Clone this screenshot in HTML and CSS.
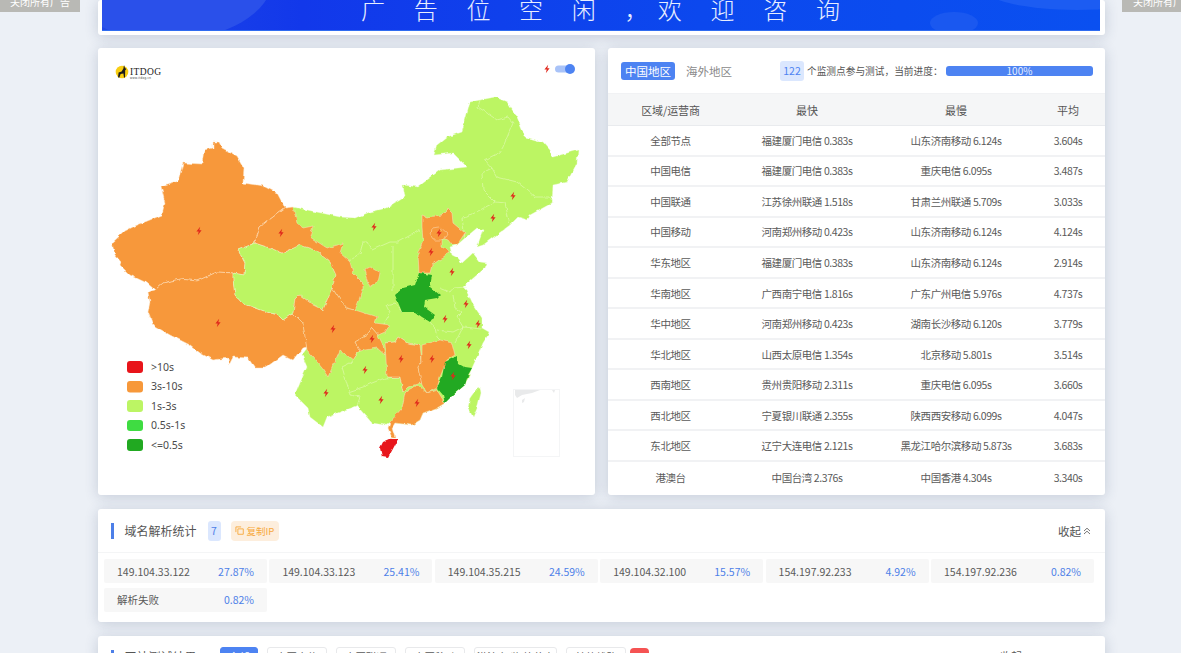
FILE: index.html
```html
<!DOCTYPE html>
<html lang="zh-CN">
<head>
<meta charset="utf-8">
<title>ITDOG 网站测速</title>
<link rel="stylesheet" href="styles.css">
</head>
<body>
<button class="close-ad close-left">关闭所有广告</button>
<button class="close-ad close-right">关闭所有广告</button>
<main class="main">
  <section class="card banner">
    <div class="banner-blue">
      <span class="bubble bubble-left"></span>
      <span class="bubble bubble-right"></span>
      <span class="bubble bubble-small"></span>
      <span class="banner-text">广告位空闲<span class="comma">，</span>欢迎咨询</span>
    </div>
  </section>

  <div class="two-col">
    <section class="card map-card">
      <svg class="map" viewBox="98 48 497 447" width="497" height="447" xmlns="http://www.w3.org/2000/svg">
        <defs>
          <path id="bolt" d="M1.200-4.200-2.600.6H-.3L-1.200 4.200 2.600-.8H.3Z"/>
          <filter id="rough" x="98" y="48" width="497" height="447" filterUnits="userSpaceOnUse" primitiveUnits="userSpaceOnUse">
            <feTurbulence type="fractalNoise" baseFrequency=".16" numOctaves="2" seed="4" result="n"/>
            <feDisplacementMap in="SourceGraphic" in2="n" scale="3.500" xChannelSelector="R" yChannelSelector="G"/>
          </filter>
        </defs>
        <circle class="logo-sun" cx="122" cy="72" r="6.300"/>
        <path class="logo-dog" d="M118 77.500l.6-5 3-1 1.800-3 .6-3.500 1 3 1.400 1-1.200 1.200-.2 7.300h-1l-.6-4-2.800.4-1.200 3.600z"/>
        <text class="logo-text" x="130" y="75">ITDOG</text>
        <text class="logo-sub" x="130" y="79">www.itdog.cn</text>

        <use href="#bolt" class="bolt" x="547" y="69"/>
        <rect class="switch-track" x="555" y="65.500" width="18" height="7" rx="3.500"/>
        <circle class="switch-knob" cx="570" cy="69" r="5"/>

        <g class="rough">
        <polygon class="p-green" points="293,207 340,217 355,218 370,212 387,208 405,197 403,185 418,187 440,170 467,167 453,153 434,155 437,145 447,137 462,132 468,110 470,102 495,97 507,102 517,117 525,137 543,142 550,150 553,157 578,150 577,163 567,182 553,185 552,203 530,215 528,220 518,217 510,225 483,245 477,247 483,230 477,228 465,238 457,245 450,247 452,255 458,258 462,263 473,253 480,262 487,263 485,268 463,287 466,290 472,303 482,318 482,328 489,332 488,335 483,343 478,355 472,368 465,385 453,395 445,403 437,408 423,413 420,420 412,425 395,423 390,422 385,425 372,423 365,415 357,406 340,412 327,417 323,427 310,417 308,408 295,395 300,383 307,367 302,355 307,348 293,313"/>
        <polyline class="line" points="480,100 478,107 487,113 497,120 508,117 513,123 503,147 500,152 485,160 492,168 497,177 517,182 527,190 535,197 550,197 553,203"/>
        <polyline class="line" points="492,168 482,173 483,190 495,202 505,203 510,225"/>
        <polyline class="line" points="495,202 467,217 462,218 465,238"/>
        <polyline class="line" points="398,242 420,230"/>
        <polyline class="line" points="393,245 393,290"/>
        <polyline class="line" points="348,262 360,253 363,242 367,242 372,250 390,242 398,242"/>
        <polyline class="line" points="386,305 395,303 402,312"/>
        <polyline class="line" points="386,305 390,313 378,335"/>
        <polyline class="line" points="430,322 435,328 437,337 440,340"/>
        <polyline class="line" points="385,343 395,342 398,337 407,343 420,345"/>
        <polyline class="line" points="437,330 453,332 463,327 455,343"/>
        <polyline class="line" points="440,288 450,292 453,288 467,287"/>
        <polyline class="line" points="453,295 455,308 462,312 457,317 463,327 482,329"/>
        <polyline class="line" points="342,367 350,363 360,351"/>
        <polyline class="line" points="342,367 348,387 350,395 360,397 357,406"/>
        <polyline class="line" points="348,392 363,387 372,383 385,378"/>
        <polyline class="line" points="385,378 400,377 403,392"/>

        <polygon class="p-orange" points="112,243 125,231 135,226 145,222 162,215 165,203 161,186 178,181 183,163 202,164 204,150 213,148 213,142 219,142 222,148 237,156 244,168 243,183 263,186 277,193 285,208 273,217 260,227 255,243 238,250 245,263 244,275 233,273 217,272 197,281 180,279 163,283 155,290 147,283 130,275 120,265 121,262 115,255"/>
        <polygon class="p-orange" points="155,290 163,283 180,279 197,281 217,272 233,273 233,280 235,295 242,303 267,312 278,315 283,320 293,313 303,323 307,347 302,348 293,360 283,355 265,368 255,368 248,358 233,357 229,365 228,358 213,360 200,353 190,345 170,335 153,325 148,312 150,302 148,292"/>
        <polygon class="p-green" points="238,250 255,243 270,248 283,253 300,245 315,250 330,262 336,275 332,288 323,310 313,305 300,295 295,300 293,313 283,320 278,315 267,312 242,303 235,295 233,280 233,273 244,275 245,263"/>
        <polygon class="p-orange" points="285,208 293,207 297,223 303,228 313,226 310,237 327,248 330,247 343,243 340,253 350,262 353,273 363,283 363,290 358,303 355,310 347,308 340,300 332,288 336,275 330,262 315,250 300,245 283,253 270,248 255,243 260,227 273,217"/>
        <polygon class="p-orange" points="293,313 295,300 300,295 313,305 323,310 332,288 340,300 347,308 355,310 377,317 375,323 390,325 385,332 378,335 372,328 367,335 355,342 360,350 353,360 340,350 328,377 322,368 307,350 303,323"/>
        <polygon class="p-orange" points="355,342 367,335 372,328 378,335 383,345 385,355 377,348 365,350 360,351"/>
        <polygon class="p-orange" points="364,270 370,267 380,273 378,282 370,287 367,280"/>
        <polygon class="p-orange" points="422,215 427,217 442,215 448,209 452,213 453,223 465,233 457,245 452,245 448,240 442,238 442,247 450,252 442,258 432,265 430,273 419,273 418,253 423,240 422,227"/>
        <polygon class="p-orange" points="432,228 440,227 447,233 443,240 433,240 431,235"/>
        <polygon class="p-orange" points="385,343 395,342 398,337 407,343 420,345 422,362 418,367 422,383 408,387 403,392 400,377 387,377"/>
        <polygon class="p-orange" points="422,345 440,340 452,343 455,355 447,360 440,377 437,388 427,393 422,385 418,367 422,362"/>
        <polygon class="p-orange" points="408,390 418,385 427,393 437,390 445,403 437,408 423,413 420,420 412,425 395,423 392,428 395,438 392,438 388,428 390,422 402,408 405,393"/>
        <polygon class="p-dark" points="419,273 432,275 430,287 440,295 437,298 425,300 424,307 435,315 430,322 422,317 415,312 402,312 395,295 403,288 415,285"/>
        <polygon class="p-dark" points="457,356 458,363 465,367 472,368 468,375 465,385 453,395 445,403 443,395 437,388 442,377 445,362"/>
        <polygon class="p-red" points="398,439 395,445 388,458 382,457 380,448 383,442 390,439"/>
        <polygon class="p-green" points="480,387 477,388 470,398 468,408 473,417 478,405 481,393"/>
        </g>

        <rect class="inset" x="513.500" y="389.500" width="46" height="67"/>
        <path class="inset-land" d="M515 390h25l-8 3-10 2-5 3-2-3zM522 400l3-2-1 4-2 1zM552 390h3l-1 3z"/>

        <use href="#bolt" class="bolt" x="199" y="231"/>
        <use href="#bolt" class="bolt" x="281" y="233"/>
        <use href="#bolt" class="bolt" x="374" y="227"/>
        <use href="#bolt" class="bolt" x="439" y="233"/>
        <use href="#bolt" class="bolt" x="431" y="252"/>
        <use href="#bolt" class="bolt" x="452" y="272"/>
        <use href="#bolt" class="bolt" x="493" y="218"/>
        <use href="#bolt" class="bolt" x="513" y="196"/>
        <use href="#bolt" class="bolt" x="218" y="323"/>
        <use href="#bolt" class="bolt" x="333" y="329"/>
        <use href="#bolt" class="bolt" x="326" y="393"/>
        <use href="#bolt" class="bolt" x="466" y="304"/>
        <use href="#bolt" class="bolt" x="445" y="319"/>
        <use href="#bolt" class="bolt" x="478" y="324"/>
        <use href="#bolt" class="bolt" x="372" y="339"/>
        <use href="#bolt" class="bolt" x="365" y="370"/>
        <use href="#bolt" class="bolt" x="401" y="359"/>
        <use href="#bolt" class="bolt" x="432" y="359"/>
        <use href="#bolt" class="bolt" x="469" y="345"/>
        <use href="#bolt" class="bolt" x="453" y="376"/>
        <use href="#bolt" class="bolt" x="381" y="400"/>
        <use href="#bolt" class="bolt" x="417" y="403"/>

        <rect class="p-red" x="127" y="361" width="16" height="12" rx="3"/>
        <text class="legend" x="151" y="371">&gt;10s</text>
        <rect class="p-orange no-stroke" x="127" y="381" width="16" height="11.500" rx="3"/>
        <text class="legend" x="151" y="390">3s-10s</text>
        <rect class="p-green no-stroke" x="127" y="400" width="16" height="12" rx="3"/>
        <text class="legend" x="151" y="410">1s-3s</text>
        <rect class="p-light" x="127" y="420" width="16" height="11" rx="3"/>
        <text class="legend" x="151" y="429">0.5s-1s</text>
        <rect class="p-dark no-stroke" x="127" y="439" width="16" height="12" rx="3"/>
        <text class="legend" x="151" y="449">&lt;=0.5s</text>
      </svg>
    </section>

    <section class="card table-card">
      <div class="table-top">
        <span class="tab tab-active">中国地区</span>
        <span class="tab tab-other">海外地区</span>
        <span class="count">122</span>
        <span class="progress-label">个监测点参与测试，当前进度：</span>
        <div class="progress">100%</div>
      </div>
      <div class="row row-head"><span>区域/运营商</span><span>最快</span><span>最慢</span><span>平均</span></div>
      <div class="row"><span>全部节点</span><span>福建厦门电信 0.383s</span><span>山东济南移动 6.124s</span><span>3.604s</span></div>
      <div class="row"><span>中国电信</span><span>福建厦门电信 0.383s</span><span>重庆电信 6.095s</span><span>3.487s</span></div>
      <div class="row"><span>中国联通</span><span>江苏徐州联通 1.518s</span><span>甘肃兰州联通 5.709s</span><span>3.033s</span></div>
      <div class="row"><span>中国移动</span><span>河南郑州移动 0.423s</span><span>山东济南移动 6.124s</span><span>4.124s</span></div>
      <div class="row"><span>华东地区</span><span>福建厦门电信 0.383s</span><span>山东济南移动 6.124s</span><span>2.914s</span></div>
      <div class="row"><span>华南地区</span><span>广西南宁电信 1.816s</span><span>广东广州电信 5.976s</span><span>4.737s</span></div>
      <div class="row"><span>华中地区</span><span>河南郑州移动 0.423s</span><span>湖南长沙移动 6.120s</span><span>3.779s</span></div>
      <div class="row"><span>华北地区</span><span>山西太原电信 1.354s</span><span>北京移动 5.801s</span><span>3.514s</span></div>
      <div class="row"><span>西南地区</span><span>贵州贵阳移动 2.311s</span><span>重庆电信 6.095s</span><span>3.660s</span></div>
      <div class="row"><span>西北地区</span><span>宁夏银川联通 2.355s</span><span>陕西西安移动 6.099s</span><span>4.047s</span></div>
      <div class="row"><span>东北地区</span><span>辽宁大连电信 2.121s</span><span>黑龙江哈尔滨移动 5.873s</span><span>3.683s</span></div>
      <div class="row row-last"><span>港澳台</span><span>中国台湾 2.376s</span><span>中国香港 4.304s</span><span>3.340s</span></div>
    </section>
  </div>

  <section class="card dns-card">
    <header class="card-head">
      <span class="title-bar"></span>
      <h2 class="title">域名解析统计</h2>
      <span class="chip-count">7</span>
      <span class="chip-copy">
        <svg class="copy-icon" viewBox="0 0 10 10" width="9" height="9"><path d="M3.200 3.200h6v6h-6zM1 6.800V1h5.800"/></svg>复制IP
      </span>
      <span class="collapse">收起
        <svg class="chev" viewBox="0 0 8 8" width="8" height="8"><path d="M1 4 4 1.200 7 4M1 7 4 4.200 7 7"/></svg>
      </span>
    </header>
    <div class="ip-grid">
      <div class="ip"><span>149.104.33.122</span><b>27.87%</b></div>
      <div class="ip"><span>149.104.33.123</span><b>25.41%</b></div>
      <div class="ip"><span>149.104.35.215</span><b>24.59%</b></div>
      <div class="ip"><span>149.104.32.100</span><b>15.57%</b></div>
      <div class="ip"><span>154.197.92.233</span><b>4.92%</b></div>
      <div class="ip"><span>154.197.92.236</span><b>0.82%</b></div>
      <div class="ip"><span>解析失败</span><b>0.82%</b></div>
    </div>
  </section>

  <section class="card result-card">
    <span class="title-bar title-bar-low"></span>
    <h2 class="title">网站测试结果</h2>
    <div class="filters">
      <span class="filter filter-on">全部</span>
      <span class="filter f-60">中国电信</span>
      <span class="filter f-60">中国联通</span>
      <span class="filter f-60">中国移动</span>
      <span class="filter f-83">港澳台/海外节点</span>
      <span class="filter f-60">其他线路</span>
      <span class="filter-red">错</span>
    </div>
    <span class="result-right">收起</span>
  </section>
</main>
</body>
</html>
```
FILE: styles.css
```css
* { box-sizing: border-box; }
html, body { margin: 0; height: 653px; overflow: hidden; }
body {
  position: relative;
  background: #ecf0f6;
  font-family: "Noto Sans CJK SC", "Noto Sans", sans-serif;
  color: #5a5a5a;
  font-size: 10.500px;
}
.close-ad {
  position: absolute;
  top: -12px;
  width: 80px;
  height: 24px;
  padding: 3px 0 0 10px;
  border: 0;
  background: #b9b9b5;
  color: #fff;
  font: 10px "Noto Sans CJK SC", sans-serif;
  white-space: nowrap;
  text-align: left;
}
.close-left { left: 0; }
.close-right { left: 1122px; padding-left: 11px; }

.main { width: 1007px; margin-left: 98px; display: flex; flex-direction: column; }
.card { background: #fff; border-radius: 3px; box-shadow: 0 2px 14px rgba(40, 60, 100, .2); }

.banner { height: 35px; padding: 0 5px 4px 4px; }
.banner-blue {
  position: relative;
  height: 31px;
  overflow: hidden;
  background: linear-gradient(90deg, #2046e6 0%, #1238ea 20%, #0c48ee 60%, #0a50f0 100%);
  border-bottom: 1px solid #2f6cf0;
}
.bubble { position: absolute; border-radius: 50%; }
.bubble-left { left: -40px; top: -80px; width: 210px; height: 120px; background: #2a50ea; }
.bubble-right { left: 880px; top: -36px; width: 190px; height: 46px; background: #1c5cf2; }
.bubble-small { left: 828px; top: 12px; width: 48px; height: 22px; background: #1a58f0; }
.banner-text {
  position: absolute;
  left: 259px;
  top: -9px;
  color: #e8eeff;
  font-size: 24px;
  font-weight: 300;
  letter-spacing: 28.700px;
  line-height: 36px;
  white-space: nowrap;
}
.comma { letter-spacing: 9.300px; }

.two-col { display: grid; grid-template-columns: 497px 497px; gap: 13px; margin-top: 13px; }
.map-card { height: 447px; }
.map { display: block; }
.rough { filter: url(#rough); }
.p-green { fill: #bcf564; stroke: #eefcd6; stroke-width: .4; }
.p-orange { fill: #f7983a; stroke: #fde3c2; stroke-width: .5; }
.p-dark { fill: #21a921; stroke: none; }
.p-red { fill: #e8141a; }
.p-light { fill: #3fdc42; }
.no-stroke { stroke: none; }
.line { fill: none; stroke: #e4fab8; stroke-width: .6; }
.bolt { fill: #e0281c; }
.inset { fill: #fff; stroke: #f4f5f6; stroke-width: 1; }
.inset-land { fill: #e9eaeb; }
.legend { font: 10.500px "Noto Sans", sans-serif; fill: #4a4a4a; }
.logo-sun { fill: #f8ce13; }
.logo-dog { fill: #1c1c1c; }
.logo-text { font: 9.500px "Liberation Serif", serif; letter-spacing: .4px; fill: #222; }
.logo-sub { font: 3px "Liberation Sans", sans-serif; letter-spacing: .3px; fill: #444; }
.switch-track { fill: #a9c3f8; }
.switch-knob { fill: #4d83f2; }

.table-card { height: 447px; }
.table-top { display: flex; align-items: center; height: 45px; padding: 0 13px; }
.tab { flex: none; font-size: 11.500px; color: #8a8a8a; line-height: 18px; white-space: nowrap; }
.tab-active { width: 54px; text-align: center; border-radius: 3px; background: #4d83f2; color: #fff; margin-right: 11px; }
.tab-other { width: 45px; }
.count {
  flex: none;
  width: 24px;
  height: 20px;
  margin-left: 49px;
  border-radius: 3px;
  background: #dbe7fe;
  color: #4d83f2;
  text-align: center;
  line-height: 20px;
  font-size: 10.500px;
}
.progress-label { flex: none; width: 139px; margin-left: 3px; font-size: 9.700px; white-space: nowrap; color: #555; }
.progress {
  flex: none;
  width: 147px;
  height: 10px;
  border-radius: 3px;
  background: #4d83f2;
  color: #e6eeff;
  font-size: 10px;
  line-height: 10px;
  text-align: center;
}
.row {
  display: grid;
  grid-template-columns: 125px 148px 150px 74px;
  align-items: center;
  height: 30.550px;
  text-align: center;
  border-bottom: 2px solid #f1f2f4;
  white-space: nowrap;
  letter-spacing: -.42px;
}
.row-last { border-bottom: 0; }
.row-head { height: 33px; background: #f5f6f7; font-size: 11px; letter-spacing: -.1px; border-top: 1px solid #f1f2f4; border-bottom: 1px solid #e9ebee; color: #555; }

.dns-card { margin-top: 14px; height: 113px; }
.card-head { display: flex; align-items: center; height: 44px; padding: 0 14px 0 13px; border-bottom: 1px solid #f4f5f6; }
.title-bar { display: block; width: 2.500px; height: 16px; background: #4d7fe8; }
.title { margin: 0 0 0 11px; font-size: 12px; font-weight: 400; color: #555; white-space: nowrap; }
.chip-count {
  width: 13px;
  height: 20px;
  margin-left: 11px;
  border-radius: 3px;
  background: #dbe7fe;
  color: #4d7fe8;
  text-align: center;
  line-height: 20px;
}
.chip-copy {
  display: flex;
  align-items: center;
  gap: 3px;
  width: 48px;
  height: 20px;
  margin-left: 10px;
  padding-left: 4px;
  border-radius: 4px;
  background: #fdeedd;
  color: #f7a93c;
  font-size: 9.500px;
  white-space: nowrap;
}
.copy-icon { fill: none; stroke: #f7a93c; stroke-width: 1; flex: none; }
.collapse { display: flex; align-items: center; gap: 2px; margin-left: auto; font-size: 11.500px; color: #555; }
.chev { fill: none; stroke: #666; stroke-width: .9; }
.ip-grid {
  display: grid;
  grid-template-columns: repeat(6, 1fr);
  gap: 4.500px 2.400px;
  padding: 6px 11px 0 6px;
}
.ip {
  display: flex;
  justify-content: space-between;
  align-items: center;
  height: 24px;
  padding: 0 13px;
  background: #f7f7f7;
  border-radius: 2px;
  white-space: nowrap;
}
.ip b { font-weight: 400; color: #4d7fe8; }

.result-card { position: relative; display: flex; align-items: flex-start; margin-top: 14px; height: 60px; padding: 11px 0 0 13px; flex: none; }
.title-bar-low { margin-top: 3px; flex: none; }
.result-card .title { line-height: 20px; }
.filters { position: absolute; left: 122px; top: 11px; display: flex; align-items: flex-start; }
.filter {
  height: 22px;
  line-height: 18px;
  border: 1px solid #e8e9eb;
  border-radius: 3px;
  text-align: center;
  white-space: nowrap;
  margin-right: 9px;
}
.filter-on { width: 38px; background: #4d83f2; color: #fff; border-color: #4d83f2; }
.f-60 { width: 60px; }
.f-83 { width: 83px; }
.filter-red { width: 19px; height: 22px; margin-left: -5px; margin-top: 1px; border-radius: 4px; background: #f55353; color: #fff; text-align: center; line-height: 20px; }
.result-right { position: absolute; left: 902px; top: 12px; font-size: 11px; }
```
